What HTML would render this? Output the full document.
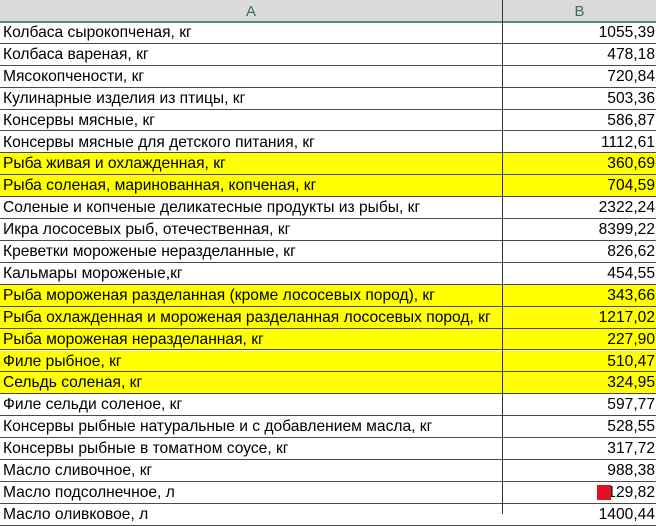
<!DOCTYPE html><html><head><meta charset="utf-8"><style>
body{margin:0;width:656px;height:514px;overflow:hidden;background:#fff;font-family:"Liberation Sans",sans-serif}
.h{position:absolute;top:0;left:0;width:656px;height:21px;background:#dadada;border-bottom:2px solid #5a8f6a;}
.h div{position:absolute;top:0;height:21px;line-height:23px;font-size:15px;color:#3b6e4c;text-align:center}
.r{position:absolute;left:0;width:656px;height:21.9px;border-bottom:1px solid #4a4a4a;box-sizing:border-box;font-size:15.6px;line-height:22px}
.r .a{position:absolute;left:3px;top:0}
.r .b{position:absolute;right:1px;top:0}
.y{background:#ffff00}
.v{position:absolute;left:502px;top:0;width:1px;height:514px;background:#333}
</style></head><body>
<div class="h"><div style="left:0;width:502px">A</div><div style="left:503px;width:153px">B</div></div>
<div class="r" style="top:22px"><span class="a">Колбаса сырокопченая, кг</span><span class="b">1055,39</span></div>
<div class="r" style="top:43.9px"><span class="a">Колбаса вареная, кг</span><span class="b">478,18</span></div>
<div class="r" style="top:65.8px"><span class="a">Мясокопчености, кг</span><span class="b">720,84</span></div>
<div class="r" style="top:87.7px"><span class="a">Кулинарные изделия из птицы, кг</span><span class="b">503,36</span></div>
<div class="r" style="top:109.6px"><span class="a">Консервы мясные, кг</span><span class="b">586,87</span></div>
<div class="r" style="top:131.5px"><span class="a">Консервы мясные для детского питания, кг</span><span class="b">1112,61</span></div>
<div class="r y" style="top:153.4px"><span class="a">Рыба живая и охлажденная, кг</span><span class="b">360,69</span></div>
<div class="r y" style="top:175.3px"><span class="a">Рыба соленая, маринованная, копченая, кг</span><span class="b">704,59</span></div>
<div class="r" style="top:197.2px"><span class="a">Соленые и копченые деликатесные продукты из рыбы, кг</span><span class="b">2322,24</span></div>
<div class="r" style="top:219.1px"><span class="a">Икра лососевых рыб, отечественная, кг</span><span class="b">8399,22</span></div>
<div class="r" style="top:241px"><span class="a">Креветки мороженые неразделанные, кг</span><span class="b">826,62</span></div>
<div class="r" style="top:262.9px"><span class="a">Кальмары мороженые,кг</span><span class="b">454,55</span></div>
<div class="r y" style="top:284.8px"><span class="a">Рыба мороженая разделанная (кроме лососевых пород), кг</span><span class="b">343,66</span></div>
<div class="r y" style="top:306.7px"><span class="a">Рыба охлажденная и мороженая разделанная лососевых пород, кг</span><span class="b">1217,02</span></div>
<div class="r y" style="top:328.6px"><span class="a">Рыба мороженая неразделанная, кг</span><span class="b">227,90</span></div>
<div class="r y" style="top:350.5px"><span class="a">Филе рыбное, кг</span><span class="b">510,47</span></div>
<div class="r y" style="top:372.4px"><span class="a">Сельдь соленая, кг</span><span class="b">324,95</span></div>
<div class="r" style="top:394.3px"><span class="a">Филе сельди соленое, кг</span><span class="b">597,77</span></div>
<div class="r" style="top:416.2px"><span class="a">Консервы рыбные натуральные и с добавлением масла, кг</span><span class="b">528,55</span></div>
<div class="r" style="top:438.1px"><span class="a">Консервы рыбные в томатном соусе, кг</span><span class="b">317,72</span></div>
<div class="r" style="top:460px"><span class="a">Масло сливочное, кг</span><span class="b">988,38</span></div>
<div class="r" style="top:481.9px"><span class="a">Масло подсолнечное, л</span><span class="b">129,82</span></div>
<div class="r" style="top:503.8px"><span class="a">Масло оливковое, л</span><span class="b">1400,44</span></div>
<div style="position:absolute;left:597px;top:485px;width:14px;height:15px;background:#e0101e"></div>
<div class="v"></div>
</body></html>
